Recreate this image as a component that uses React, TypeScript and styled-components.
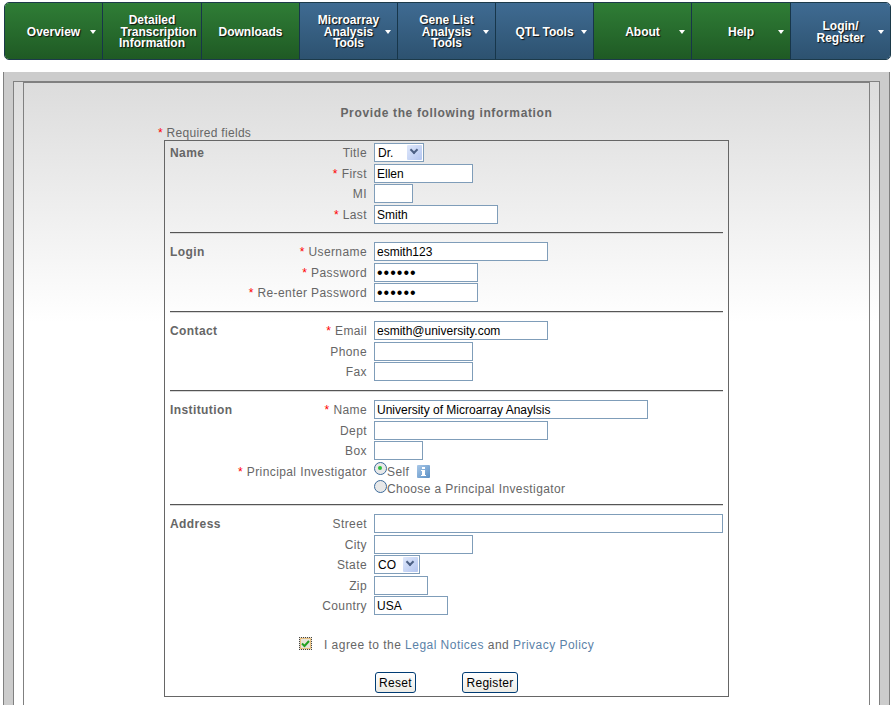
import React from "react";
import styled, { createGlobalStyle } from "styled-components";

const GlobalStyle = createGlobalStyle`
    html, body {
        margin: 0;
        padding: 0;
        background: #fff;
    }
    body {
        font-family: "Liberation Sans", Arial, sans-serif;
        font-size: 12px;
        color: #666;
    }
`;

interface NavItem {
    lines: string[];
    tone: "green" | "blue";
    arrow?: boolean;
}

const navItems: NavItem[] = [
    { lines: ["Overview"], tone: "green", arrow: true },
    { lines: ["Detailed", "Transcription", "Information"], tone: "green" },
    { lines: ["Downloads"], tone: "green" },
    { lines: ["Microarray", "Analysis", "Tools"], tone: "blue", arrow: true },
    { lines: ["Gene List", "Analysis", "Tools"], tone: "blue", arrow: true },
    { lines: ["QTL Tools"], tone: "blue", arrow: true },
    { lines: ["About"], tone: "green", arrow: true },
    { lines: ["Help"], tone: "green", arrow: true },
    { lines: ["Login/", "Register"], tone: "blue", arrow: true },
];

function App() {
    return (
        <Page>
            <GlobalStyle />
            <NavBar>
                {navItems.map((item) => (
                    <NavCell key={item.lines.join(" ")} $tone={item.tone}>
                        <NavLabel>
                            {item.lines.map((line) => (
                                <NavLine key={line} $indent={line === "Transcription"}>{line}</NavLine>
                            ))}
                        </NavLabel>
                        {item.arrow && <NavArrow />}
                    </NavCell>
                ))}
            </NavBar>
            <OuterPanel>
                <InnerPanel>
                    <ContentPanel>
                        <Heading>Provide the following information</Heading>
                        <RequiredNote>
                            <Star>*</Star> Required fields
                        </RequiredNote>
                        <FormBox>
                            <Section $first>
                                <SectionTitle>Name</SectionTitle>
                                <Row>
                                    <Label>Title</Label>
                                    <SelectBox $width={50}>
                                        <span>Dr.</span>
                                        <SelectButton />
                                    </SelectBox>
                                </Row>
                                <Row>
                                    <Label><Star>*</Star> First</Label>
                                    <Field $width={99} defaultValue="Ellen" />
                                </Row>
                                <Row>
                                    <Label>MI</Label>
                                    <Field $width={39} />
                                </Row>
                                <Row>
                                    <Label><Star>*</Star> Last</Label>
                                    <Field $width={124} defaultValue="Smith" />
                                </Row>
                            </Section>
                            <Section>
                                <SectionTitle>Login</SectionTitle>
                                <Row>
                                    <Label><Star>*</Star> Username</Label>
                                    <Field $width={174} defaultValue="esmith123" />
                                </Row>
                                <Row>
                                    <Label><Star>*</Star> Password</Label>
                                    <Field $width={104} type="password" defaultValue="secret" />
                                </Row>
                                <Row>
                                    <Label><Star>*</Star> Re-enter Password</Label>
                                    <Field $width={104} type="password" defaultValue="secret" />
                                </Row>
                            </Section>
                            <Section>
                                <SectionTitle>Contact</SectionTitle>
                                <Row>
                                    <Label><Star>*</Star> Email</Label>
                                    <Field $width={174} defaultValue="esmith@university.com" />
                                </Row>
                                <Row>
                                    <Label>Phone</Label>
                                    <Field $width={99} />
                                </Row>
                                <Row>
                                    <Label>Fax</Label>
                                    <Field $width={99} />
                                </Row>
                            </Section>
                            <Section>
                                <SectionTitle>Institution</SectionTitle>
                                <Row>
                                    <Label><Star>*</Star> Name</Label>
                                    <Field $width={274} defaultValue="University of Microarray Anaylsis" />
                                </Row>
                                <Row>
                                    <Label>Dept</Label>
                                    <Field $width={174} />
                                </Row>
                                <Row>
                                    <Label>Box</Label>
                                    <Field $width={49} />
                                </Row>
                                <Row>
                                    <Label><Star>*</Star> Principal Investigator</Label>
                                    <RadioStack>
                                        <RadioRow>
                                            <Radio $checked />
                                            Self
                                            <InfoIcon width="13" height="13" viewBox="0 0 13 13">
                                                <defs>
                                                    <linearGradient id="infoFill" x1="0" y1="0" x2="1" y2="1">
                                                        <stop offset="0" stopColor="#a9c8e8" />
                                                        <stop offset="1" stopColor="#5a8fc4" />
                                                    </linearGradient>
                                                </defs>
                                                <rect width="13" height="13" rx="1" fill="url(#infoFill)" />
                                                <rect x="5" y="2" width="3" height="2" fill="#fff" />
                                                <path d="M4 5h4v5h1v1H4v-1h1V6H4z" fill="#fff" />
                                            </InfoIcon>
                                        </RadioRow>
                                        <RadioRow>
                                            <Radio />
                                            Choose a Principal Investigator
                                        </RadioRow>
                                    </RadioStack>
                                </Row>
                            </Section>
                            <Section $last>
                                <SectionTitle>Address</SectionTitle>
                                <Row>
                                    <Label>Street</Label>
                                    <Field $width={349} />
                                </Row>
                                <Row>
                                    <Label>City</Label>
                                    <Field $width={99} />
                                </Row>
                                <Row>
                                    <Label>State</Label>
                                    <SelectBox $width={46}>
                                        <span>CO</span>
                                        <SelectButton />
                                    </SelectBox>
                                </Row>
                                <Row>
                                    <Label>Zip</Label>
                                    <Field $width={54} />
                                </Row>
                                <Row>
                                    <Label>Country</Label>
                                    <Field $width={74} defaultValue="USA" />
                                </Row>
                            </Section>
                            <AgreeRow>
                                <CheckBox>
                                    <svg width="11" height="11" viewBox="0 0 11 11">
                                        <path d="M2 5.5 L4.5 8 L9 3" fill="none" stroke="#21a121" strokeWidth="2" />
                                    </svg>
                                </CheckBox>
                                <span>
                                    I agree to the <TextLink>Legal Notices</TextLink> and <TextLink>Privacy Policy</TextLink>
                                </span>
                            </AgreeRow>
                            <ButtonRow>
                                <FormButton $width={41}>Reset</FormButton>
                                <FormButton $width={56}>Register</FormButton>
                            </ButtonRow>
                        </FormBox>
                    </ContentPanel>
                </InnerPanel>
            </OuterPanel>
        </Page>
    );
}

const Page = styled.div`
    width: 893px;
    height: 705px;
    overflow: hidden;
    padding: 2px 2px 0 4px;
    box-sizing: border-box;
`;

const NavBar = styled.div`
    display: grid;
    grid-template-columns: 97px 99px 98px 98px 98px 98px 98px 99px 100px;
    height: 58px;
    border: 1px solid #1c3a4a;
    border-radius: 5px;
    overflow: hidden;
    box-sizing: border-box;
`;

const NavCell = styled.div<{ $tone: "green" | "blue" }>`
    position: relative;
    display: flex;
    align-items: center;
    justify-content: center;
    padding-top: 3px;
    box-sizing: border-box;
    border-left: 1px solid #17364a;
    background: ${(p) =>
        p.$tone === "green"
            ? "linear-gradient(#2f7d36, #1f5a24)"
            : "linear-gradient(#3f6b92, #2d5270)"};
    &:first-child {
        border-left: none;
    }
`;

const NavLabel = styled.div`
    display: flex;
    flex-direction: column;
    align-items: center;
    color: #fff;
    font-weight: bold;
    font-size: 12px;
    line-height: 11.5px;
    text-shadow: 1px 1px 1px #111;
`;

const NavLine = styled.span<{ $indent?: boolean }>`
    display: block;
    margin-left: ${(p) => (p.$indent ? "13px" : "0")};
`;

const NavArrow = styled.div`
    position: absolute;
    right: 6px;
    top: 27px;
    width: 0;
    height: 0;
    border-left: 3px solid transparent;
    border-right: 3px solid transparent;
    border-top: 4px solid #fff;
`;

const OuterPanel = styled.div`
    margin: 12px 1px 0 -1px;
    height: 640px;
    padding: 9px 9px 0 9px;
    border-left: 1px solid #808080;
    border-right: 1px solid #808080;
    background: #ccc;
`;

const InnerPanel = styled.div`
    height: 100%;
    padding: 0 9px;
    border-left: 1px solid #808080;
    border-right: 1px solid #808080;
    border-top: 1px solid #808080;
    background: linear-gradient(#dcdcdc, #fff 240px);
`;

const ContentPanel = styled.div`
    height: 100%;
    border-left: 1px solid #808080;
    border-right: 1px solid #808080;
    border-top: 1px solid #808080;
    padding-top: 23px;
    box-sizing: border-box;
`;

const Heading = styled.div`
    text-align: center;
    font-weight: bold;
    letter-spacing: 0.65px;
    line-height: 14px;
    color: #666;
`;

const RequiredNote = styled.div`
    margin: 6px 0 0 134px;
    line-height: 14px;
    letter-spacing: 0.3px;
`;

const Star = styled.span`
    color: #f00;
`;

const FormBox = styled.div`
    margin: 0 0 0 140px;
    width: 565px;
    border: 1px solid #666;
    box-sizing: border-box;
    padding: 0 5px 3px;
`;

const Section = styled.div<{ $first?: boolean; $last?: boolean }>`
    position: relative;
    padding: ${(p) => (p.$first ? "2px 0 6.32px" : p.$last ? "9px 0 0" : "9px 0 7px")};
    ${(p) =>
        p.$last
            ? ""
            : `
        border-bottom: 1px solid #555;
        box-shadow: 0 1px 0 #d8d8d8;
    `}
`;

const SectionTitle = styled.div`
    position: absolute;
    left: 0;
    padding-top: 1px;
    font-weight: bold;
    letter-spacing: 0.4px;
    line-height: 19px;
`;

const Row = styled.div`
    display: flex;
    align-items: flex-start;
    min-height: 20.67px;
`;

const Label = styled.div`
    width: 197px;
    flex: none;
    text-align: right;
    padding-top: 1px;
    line-height: 19px;
    margin-right: 7px;
    letter-spacing: 0.4px;
`;

const Field = styled.input<{ $width: number }>`
    width: ${(p) => p.$width}px;
    height: 19px;
    box-sizing: border-box;
    border: 1px solid #7f9db9;
    background: #fff;
    padding: 1px 2px 0;
    margin: 0;
    font-family: "Liberation Sans", Arial, sans-serif;
    font-size: 12px;
    color: #000;
    outline: none;
    &[type="password"] {
        font-size: 16px;
        letter-spacing: 1px;
    }
`;

const SelectBox = styled.div<{ $width: number }>`
    width: ${(p) => p.$width}px;
    height: 19px;
    box-sizing: border-box;
    border: 1px solid #7f9db9;
    background: #fff;
    color: #000;
    display: flex;
    align-items: center;
    justify-content: space-between;
    padding: 0 1px 0 3px;
`;

const SelectButton = styled.div`
    position: relative;
    width: 15px;
    height: 15px;
    border-radius: 1px;
    background: linear-gradient(135deg, #dfe8fb, #b4c6f0);
    &::after {
        content: "";
        position: absolute;
        left: 4px;
        top: 2px;
        width: 4px;
        height: 4px;
        border-right: 2px solid #4d6185;
        border-bottom: 2px solid #4d6185;
        transform: rotate(45deg);
    }
`;

const RadioStack = styled.div`
    display: flex;
    flex-direction: column;
    margin: 2px 0 -2px;
`;

const RadioRow = styled.div`
    display: flex;
    align-items: center;
    height: 17.5px;
    line-height: 17.5px;
    letter-spacing: 0.4px;
`;

const Radio = styled.span<{ $checked?: boolean }>`
    position: relative;
    width: 13px;
    height: 13px;
    margin-bottom: 8px;
    box-sizing: border-box;
    border: 1.5px solid #3b6a9a;
    border-radius: 50%;
    background: #e8e8e8;
    flex: none;
    ${(p) =>
        p.$checked
            ? `&::after {
                content: "";
                position: absolute;
                left: 3px;
                top: 3px;
                width: 4px;
                height: 4px;
                border-radius: 50%;
                background: #2bbf3a;
            }`
            : ""}
`;

const InfoIcon = styled.svg`
    margin: 0 0 3px 8px;
`;

const AgreeRow = styled.div`
    display: flex;
    align-items: center;
    margin: 20px 0 0 129px;
    letter-spacing: 0.47px;
    line-height: 16px;
    gap: 12px;
`;

const CheckBox = styled.span`
    display: flex;
    align-items: center;
    justify-content: center;
    width: 13px;
    height: 13px;
    margin-top: -3px;
    box-sizing: border-box;
    border: 1px dotted #444;
    background: #e8e4d8;
    box-shadow: inset 0 0 0 1px #e8c080;
`;

const TextLink = styled.a`
    color: #5b82a8;
`;

const ButtonRow = styled.div`
    display: flex;
    gap: 46px;
    margin: 19px 0 0 205px;
`;

const FormButton = styled.button<{ $width: number }>`
    width: ${(p) => p.$width}px;
    height: 21px;
    padding: 0;
    border: 1px solid #003c74;
    border-radius: 3px;
    background: linear-gradient(#fff, #ecebe5);
    font-family: "Liberation Sans", Arial, sans-serif;
    font-size: 12px;
    color: #000;
    letter-spacing: 0.3px;
`;

export default App;
